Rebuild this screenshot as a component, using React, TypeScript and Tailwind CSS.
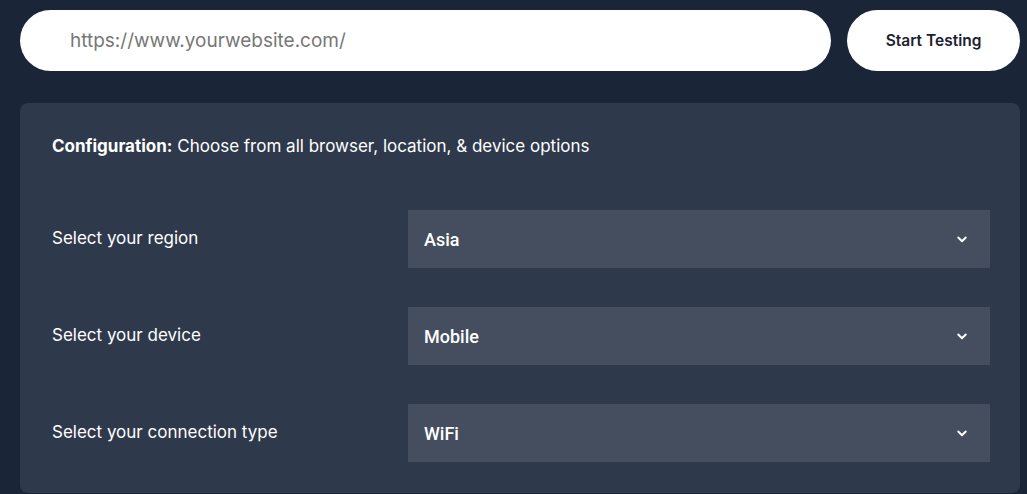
import React, { useState } from 'react'

const options: { label: string; value: string; choices: string[] }[] = [
  { label: 'Select your region', value: 'Asia', choices: ['Asia', 'Europe', 'North America'] },
  { label: 'Select your device', value: 'Mobile', choices: ['Mobile', 'Desktop', 'Tablet'] },
  { label: 'Select your connection type', value: 'WiFi', choices: ['WiFi', '4G', '3G'] },
]

const Chevron = () => (
  <svg width="18" height="18" viewBox="0 0 24 24" fill="none" stroke="currentColor" strokeWidth="2.6" strokeLinecap="round" strokeLinejoin="round">
    <path d="M7 10l5 5 5-5" />
  </svg>
)

const App: React.FC = () => {
  const [url, setUrl] = useState<string>('')

  return (
    <div className="min-h-screen bg-[#1b2538] pl-5 pr-[7px] pt-[10px] font-['Inter',sans-serif]">
      <div className="flex gap-4">
        <input
          type="text"
          value={url}
          onChange={(e) => setUrl(e.target.value)}
          placeholder="https://www.yourwebsite.com/"
          className="h-[61px] flex-1 rounded-full bg-white pl-[50px] text-[19px] text-gray-800 placeholder:text-[#777777] outline-none font-['Inter',sans-serif]"
        />
        <button className="h-[61px] w-[173px] rounded-full bg-white text-[15.5px] font-semibold text-[#1b2130]">
          Start Testing
        </button>
      </div>

      <div className="mt-8 rounded-lg bg-[#2f394c] pl-8 pr-[30px] pt-[31px] pb-[31px]">
        <p className="text-[17px] leading-[24px] text-white">
          <span className="font-bold">Configuration:</span> Choose from all browser, location, &amp; device options
        </p>

        <div className="mt-[52px] flex flex-col gap-[39px]">
          {options.map((opt) => (
            <div key={opt.label} className="flex items-center">
              <label className="w-[356px] text-[17px] text-white">{opt.label}</label>
              <div className="relative flex-1">
                <select
                  defaultValue={opt.value}
                  className="h-[58px] w-full appearance-none bg-[#444e5e] pl-4 text-[18px] font-medium text-white outline-none font-['Roboto',sans-serif]"
                >
                  {opt.choices.map((c) => (
                    <option key={c}>{c}</option>
                  ))}
                </select>
                <span className="pointer-events-none absolute right-[19px] top-1/2 -translate-y-1/2 text-white">
                  <Chevron />
                </span>
              </div>
            </div>
          ))}
        </div>
      </div>
    </div>
  )
}

export default App
